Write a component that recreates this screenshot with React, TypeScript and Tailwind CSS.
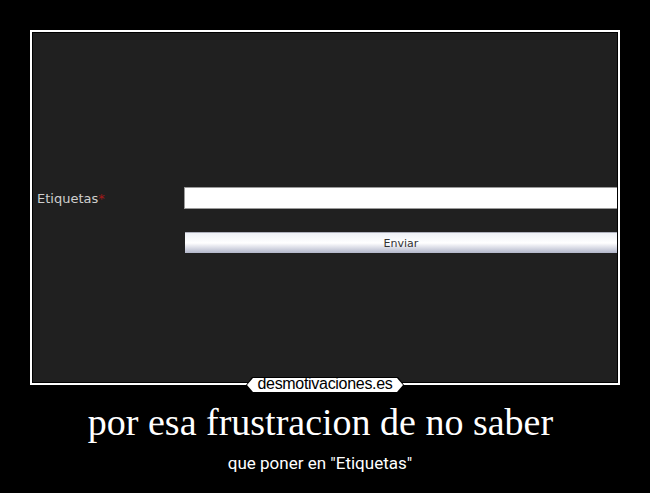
import React from 'react';

const Poster = () => {
  return (
    <main className="w-[650px] h-[493px] bg-black flex flex-col items-center overflow-hidden">
      <section className="relative mt-[30px] w-[590px] h-[355px] border-2 border-white bg-black p-[1px]">
        <div className="h-full w-full bg-[#202020] overflow-hidden font-['DejaVu_Sans',sans-serif]">
          <form className="mt-[154px] flex flex-col">
            <div className="flex items-center h-[22px]">
              <label className="w-[151px] pl-[4px] text-[13px] text-[#cfcfcf] leading-none">
                Etiquetas<span className="text-[#a31818]">*</span>
              </label>
              <input
                type="text"
                className="flex-1 h-[22px] bg-white border border-[#9a9a9a] border-r-0 outline-none"
              />
            </div>
            <button
              type="button"
              className="mt-[23px] ml-[152px] h-[21px] border-t border-[#aeb0bc] bg-gradient-to-b from-[#eef0f6] via-white to-[#b2b6ca] text-[11px] text-[#333] leading-none"
            >
              Enviar
            </button>
          </form>
        </div>
        {/* site badge sitting on the lower border */}
        <div className="absolute left-1/2 -translate-x-1/2 top-[345px] w-[158px] h-[16px] bg-black [clip-path:polygon(0_50%,6px_0,calc(100%-6px)_0,100%_50%,calc(100%-6px)_100%,6px_100%)] flex items-center justify-center">
          <div className="w-[156px] h-[14px] bg-white [clip-path:polygon(0_50%,6px_0,calc(100%-6px)_0,100%_50%,calc(100%-6px)_100%,6px_100%)] flex items-center justify-center">
            <span className="font-['Liberation_Sans',sans-serif] text-[16px] leading-none text-black tracking-[-0.3px] -mt-[2px]">
              desmotivaciones.es
            </span>
          </div>
        </div>
      </section>
      <h1 className="mt-[18px] pr-[9px] font-['Liberation_Serif',serif] text-[38px] leading-none text-white">
        por esa frustracion de no saber
      </h1>
      <p className="mt-[14px] pr-[10px] font-['Roboto',sans-serif] text-[17px] leading-[17px] text-white">
        que poner en "Etiquetas"
      </p>
    </main>
  );
};

export default function App() {
  return <Poster />;
}
